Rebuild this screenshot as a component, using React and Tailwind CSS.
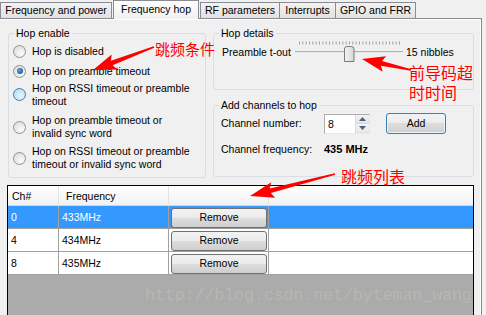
import React from 'react';

const RED = '#ff0000';

// tapered red arrow, tail -> tip
function arrowPoints(tx, ty, px, py, w0, w1, hl, hw) {
  const dx = px - tx;
  const dy = py - ty;
  const len = Math.hypot(dx, dy);
  const ux = dx / len;
  const uy = dy / len;
  const nx = -uy;
  const ny = ux;
  const bx = px - ux * hl;
  const by = py - uy * hl;
  const pts = [
    [tx + nx * w0, ty + ny * w0],
    [bx + nx * w1, by + ny * w1],
    [bx + nx * hw - ux * 3, by + ny * hw - uy * 3],
    [px, py],
    [bx - nx * hw - ux * 3, by - ny * hw - uy * 3],
    [bx - nx * w1, by - ny * w1],
    [tx - nx * w0, ty - ny * w0],
  ];
  return pts.map((p) => p.map((v) => v.toFixed(1)).join(',')).join(' ');
}

const Radio = ({ checked, hover }) => (
  <span
    className={
      hover
        ? 'flex h-[13px] w-[13px] shrink-0 items-center justify-center rounded-full border border-[#3c7fb1] bg-[radial-gradient(circle_at_60%_65%,#e6f5fd,#a9d8f3)]'
        : 'flex h-[13px] w-[13px] shrink-0 items-center justify-center rounded-full border border-[#929292] bg-[radial-gradient(circle_at_65%_70%,#fbfbfb,#d7d7d7)]'
    }
  >
    {checked && (
      <span className="h-[6px] w-[6px] rounded-full bg-[radial-gradient(circle_at_40%_40%,#5fa3e4,#0d3a7c)]" />
    )}
  </span>
);

const RadioRow = ({ h, checked, hover, children }) => (
  <div className={`flex items-center pl-[4px] ${h}`}>
    <Radio checked={checked} hover={hover} />
    <div className="ml-[6px]">{children}</div>
  </div>
);

const Slider = () => {
  const ticks = [];
  for (let i = 0; i <= 30; i++) {
    const x = 6.5 + (i * 100) / 30;
    ticks.push(<line key={i} x1={x} y1="1.5" x2={x} y2="4.5" stroke="#a0a0a0" strokeWidth="1" />);
  }
  return (
    <svg width="112" height="24" viewBox="0 0 112 24" className="block shrink-0">
      {ticks}
      <line x1="2" y1="11.5" x2="110" y2="11.5" stroke="#b0b0b0" />
      <line x1="2" y1="12.5" x2="110" y2="12.5" stroke="#e8e8e8" />
      <defs>
        <linearGradient id="thumb" x1="0" y1="0" x2="1" y2="0">
          <stop offset="0" stopColor="#f4f4f4" />
          <stop offset="1" stopColor="#d6d6d6" />
        </linearGradient>
      </defs>
      <path
        d="M51.5,21.5 V9 Q51.5,6.5 54,6.5 H58.5 Q61,6.5 61,9 V21.5 Z"
        fill="url(#thumb)"
        stroke="#7a7a7a"
      />
    </svg>
  );
};

const GroupBox = ({ title, className, children }) => (
  <fieldset className={`rounded-[3px] border border-[#d5dfe5] ${className}`}>
    <legend className="ml-[5px] px-[2px] leading-[13px]">{title}</legend>
    {children}
  </fieldset>
);

const btnBg = 'bg-[linear-gradient(#f2f2f2,#ebebeb_50%,#dddddd_50%,#cfcfcf)]';

const rows = [
  { ch: '0', freq: '433MHz', sel: true },
  { ch: '4', freq: '434MHz' },
  { ch: '8', freq: '435MHz' },
];

const App = () => {
  return (
    <div className="relative h-[315px] w-[486px] overflow-hidden bg-[#f0f0f0] font-['Liberation_Sans',Arial,sans-serif] text-[10.5px] leading-[13px] text-black">
      {/* tabs */}
      <div className="flex h-[18px] items-end">
        <div className="flex h-[16px] w-[112px] items-center justify-center border border-b-0 border-[#898c95] bg-gradient-to-b from-[#f3f3f3] to-[#e1e1e1]">
          Frequency and power
        </div>
        <div className="relative z-10 -mb-px ml-[1px] flex h-[19px] w-[86px] justify-center border border-b-0 border-[#898c95] bg-gradient-to-b from-white to-[#f0f0f0] pt-[2px]">
          Frequency hop
        </div>
        <div className="ml-[1px] flex h-[16px] w-[80px] items-center justify-center border border-b-0 border-[#898c95] bg-gradient-to-b from-[#f3f3f3] to-[#e1e1e1]">
          RF parameters
        </div>
        <div className="flex h-[16px] w-[56px] items-center justify-center border border-b-0 border-l-0 border-[#898c95] bg-gradient-to-b from-[#f3f3f3] to-[#e1e1e1]">
          Interrupts
        </div>
        <div className="flex h-[16px] w-[80px] items-center justify-center border border-b-0 border-l-0 border-[#898c95] bg-gradient-to-b from-[#f3f3f3] to-[#e1e1e1]">
          GPIO and FRR
        </div>
      </div>

      {/* tab page */}
      <div className="h-[297px] w-[482px] border-t border-r border-[#898c95] bg-[#f0f0f0] pl-[7px] pt-[8px] shadow-[inset_-1px_1px_0_#fff]">
        <div className="flex">
          <GroupBox title="Hop enable" className="ml-[1px] h-[151px] w-[198px]">
            <RadioRow h="h-[22px]">Hop is disabled</RadioRow>
            <RadioRow h="h-[18px]" checked>
              Hop on preamble timeout
            </RadioRow>
            <RadioRow h="h-[29px]" hover>
              Hop on RSSI timeout or preamble
              <br />
              timeout
            </RadioRow>
            <RadioRow h="h-[36px]">
              Hop on preamble timeout or
              <br />
              invalid sync word
            </RadioRow>
            <RadioRow h="h-[26px]">
              Hop on RSSI timeout or preamble
              <br />
              timeout or invalid sync word
            </RadioRow>
          </GroupBox>

          <div className="ml-[7px] flex flex-col">
            <GroupBox title="Hop details" className="h-[63px] w-[261px]">
              <div className="flex h-[24px] items-center pl-[8px]">
                <div className="w-[71px]">Preamble t-out</div>
                <Slider />
                <div className="ml-[1px]">15 nibbles</div>
              </div>
            </GroupBox>

            <GroupBox title="Add channels to hop" className="mt-[9px] h-[78px] w-[261px]">
              <div className="mt-[1px] flex h-[21px] items-center pl-[7px]">
                <div className="w-[103px]">Channel number:</div>
                <div className="flex h-[20px] w-[46px] border border-[#abadb3] border-r-[#e3e9ef] border-b-[#e3e9ef] bg-white">
                  <div className="flex-1 pl-[3px] leading-[18px]">8</div>
                  <div className="flex w-[14px] flex-col border-l border-[#d9d9d9]">
                    <div className="flex h-[9px] items-center justify-center border-b border-[#d9d9d9] bg-gradient-to-b from-[#f5f5f5] to-[#e4e4e4]">
                      <svg width="7" height="4" viewBox="0 0 7 4">
                        <path d="M0,4 L3.5,0 L7,4 Z" fill="#4d6185" />
                      </svg>
                    </div>
                    <div className="flex flex-1 items-center justify-center bg-gradient-to-b from-[#f5f5f5] to-[#e4e4e4]">
                      <svg width="7" height="4" viewBox="0 0 7 4">
                        <path d="M0,0 L3.5,4 L7,0 Z" fill="#4d6185" />
                      </svg>
                    </div>
                  </div>
                </div>
                <div
                  className={`ml-[16px] flex h-[21px] w-[60px] items-center justify-center rounded-[3px] border border-[#3c7fb1] ${btnBg} shadow-[inset_0_0_0_1px_#e6f4fc]`}
                >
                  Add
                </div>
              </div>
              <div className="mt-[8px] flex h-[14px] items-center pl-[7px]">
                <div className="w-[103px]">Channel frequency:</div>
                <div className="text-[11px] font-bold">435 MHz</div>
              </div>
            </GroupBox>
          </div>
        </div>

        {/* grid */}
        <div className="mt-[7px] h-[140px] w-[467px] overflow-hidden border border-black bg-[#ababab]">
          <div className="grid h-[20px] grid-cols-[51px_110px_100px_1fr] border-b border-[#d5d5d5] bg-gradient-to-b from-white to-[#f1f2f4] leading-[21px]">
            <div className="border-r border-[#e3e3e3] pl-[4px]">Ch#</div>
            <div className="border-r border-[#e3e3e3] pl-[7px]">Frequency</div>
            <div className="border-r border-[#e3e3e3]" />
            <div />
          </div>
          {rows.map((r) => (
            <div
              key={r.ch}
              className={`grid h-[23px] grid-cols-[51px_110px_100px_1fr] border-b border-[#a0a0a0] leading-[23px] ${
                r.sel ? 'bg-[#3399ff] text-white' : 'bg-white text-black'
              }`}
            >
              <div className="border-r border-[#a0a0a0] pl-[3px]">{r.ch}</div>
              <div className="border-r border-[#a0a0a0] pl-[3px]">{r.freq}</div>
              <div className="flex items-center border-r border-[#a0a0a0] pl-[2px]">
                <div
                  className={`flex h-[20px] w-[96px] items-center justify-center rounded-[3px] border border-[#707070] text-black ${btnBg}`}
                >
                  Remove
                </div>
              </div>
              <div />
            </div>
          ))}
          <div className="whitespace-nowrap pl-[137px] pt-[11px] font-['Liberation_Mono',monospace] text-[16.5px] leading-[20px] text-[#b9b7ae]">
            http://blog.csdn.net/byteman_wang
          </div>
        </div>
      </div>

      {/* red annotations */}
      <div className="pointer-events-none absolute inset-0 font-['Noto_Sans_CJK_SC',sans-serif] text-[#ff0000]">
        <div className="absolute left-[155px] top-[40px] text-[15px] leading-[18px]">跳频条件</div>
        <div className="absolute left-[409px] top-[63px] text-[16px] leading-[18px]">前导码超</div>
        <div className="absolute left-[409px] top-[83px] text-[16px] leading-[18px]">时时间</div>
        <div className="absolute left-[341px] top-[167px] text-[16px] leading-[18px]">跳频列表</div>
        <svg width="486" height="315" className="absolute left-0 top-0">
          <polygon points={arrowPoints(154, 47, 93, 70, 0.8, 2.4, 20, 8)} fill={RED} />
          <polygon points={arrowPoints(411, 70, 362, 59, 0.8, 2.4, 20, 8)} fill={RED} />
          <polygon points={arrowPoints(335, 174, 250, 196, 0.8, 2.4, 21, 8)} fill={RED} />
        </svg>
      </div>
    </div>
  );
};

export default App;
